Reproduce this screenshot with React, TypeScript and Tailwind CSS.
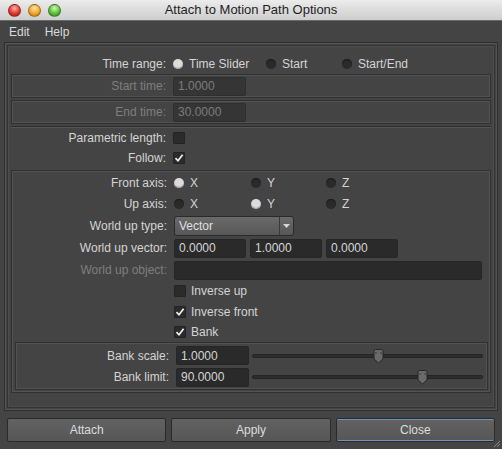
import React from 'react';

const FONT = { fontFamily: '"Liberation Sans", Arial, sans-serif' };

const Radio = ({ on }: { on?: boolean }) => (
  <span
    className={
      'inline-block w-[10px] h-[10px] rounded-full shrink-0 ' +
      (on ? 'bg-[#dcdcdc] shadow-[inset_0_-1px_1px_#999]' : 'bg-[#2a2a2a] shadow-[inset_0_1px_1px_#1a1a1a]')
    }
  />
);

const Check = ({ on }: { on?: boolean }) => (
  <span className="inline-flex items-center justify-center w-[12px] h-[12px] bg-[#2b2b2b] border border-[#232323] rounded-[1px] shrink-0">
    {on && (
      <svg width="10" height="10" viewBox="0 0 10 10">
        <path d="M1.5 5.2 L4 7.8 L8.6 1.8" fill="none" stroke="#f2f2f2" strokeWidth="1.7" />
      </svg>
    )}
  </span>
);

const Field = ({ value, w, disabled }: { value?: string; w: number; disabled?: boolean }) => (
  <div
    className={
      'h-[19px] flex items-center px-[4px] rounded-[2px] border text-[12px] ' +
      (disabled ? 'bg-[#353535] border-[#2e2e2e] text-[#7c7c7c]' : 'bg-[#2a2a2a] border-[#262626] text-[#d6d6d6]')
    }
    style={{ width: w }}
  >
    {value}
  </div>
);

const Row = ({
  label,
  lw,
  h = 22,
  dim,
  children,
}: {
  label?: string;
  lw: number;
  h?: number;
  dim?: boolean;
  children?: React.ReactNode;
}) => (
  <div className="flex items-center" style={{ height: h }}>
    <div
      className={'text-right text-[12px] shrink-0 ' + (dim ? 'text-[#7e7e7e]' : 'text-[#d4d4d4]')}
      style={{ width: lw }}
    >
      {label}
    </div>
    <div className="flex items-center ml-[7px]">{children}</div>
  </div>
);

const Opt = ({ on, text, w }: { on?: boolean; text: string; w: number }) => (
  <div className="flex items-center gap-[6px] text-[12px] text-[#d4d4d4]" style={{ width: w }}>
    <Radio on={on} />
    <span>{text}</span>
  </div>
);

const Slider = ({ pos }: { pos: number }) => (
  <div className="relative w-[231px] h-[14px] ml-[3px] flex items-center">
    <div className="w-full h-[4px] rounded-full bg-[#2d2d2d] border border-[#242424]" />
    <svg
      className="absolute top-0"
      style={{ left: Math.round(pos * 231) - 5 }}
      width="11"
      height="15"
      viewBox="0 0 11 15"
    >
      <path d="M1 2 Q1 0.5 2.5 0.5 L8.5 0.5 Q10 0.5 10 2 L10 10 L5.5 14 L1 10 Z" fill="#6a6a6a" stroke="#262626" />
      <path d="M3 3 L3 5 M8 3 L8 5" stroke="#3a3a3a" strokeWidth="1" />
    </svg>
  </div>
);

const Frame = ({ className = '', children }: { className?: string; children: React.ReactNode }) => (
  <div className={'border border-[#303030] shadow-[inset_0_0_0_1px_#525252] ' + className}>{children}</div>
);

const Light = ({ c }: { c: string }) => (
  <span className={'inline-block w-[13px] h-[13px] rounded-full border border-[#00000055] ' + c} />
);

export default function App() {
  return (
    <div className="w-[502px] h-[449px] bg-[#444444] overflow-hidden relative" style={FONT}>
      {/* title bar */}
      <div className="h-[21px] bg-gradient-to-b from-[#ececec] to-[#cdcdcd] border-b border-[#6a6a6a] flex items-center relative">
        <div className="flex items-center gap-[7px] pl-[8px]">
          <Light c="bg-[radial-gradient(circle_at_50%_30%,#ffb0a8,#e0392e_55%,#a3160e)]" />
          <Light c="bg-[radial-gradient(circle_at_50%_30%,#ffe3a0,#f2a62a_55%,#b46b08)]" />
          <Light c="bg-[radial-gradient(circle_at_50%_30%,#d6f7b8,#5cbf3a_55%,#2f7d16)]" />
        </div>
        <div className="absolute inset-0 flex items-center justify-center text-[13px] text-[#1e1e1e]">
          Attach to Motion Path Options
        </div>
      </div>

      {/* menu bar */}
      <div className="h-[21px] flex items-center gap-[15px] pl-[9px] text-[12px] text-[#dadada]">
        <span>Edit</span>
        <span>Help</span>
      </div>

      {/* main panel */}
      <div className="mx-[4px] h-[369px] border border-[#2f2f2f] shadow-[inset_0_0_0_1px_#545454] p-[2px]">
        <div className="h-full border border-[#333] shadow-[inset_0_0_0_1px_#4e4e4e] px-[3px] pt-[7px]">
          <Row label="Time range:" lw={155} h={21}>
            <Opt on text="Time Slider" w={93} />
            <Opt text="Start" w={76} />
            <Opt text="Start/End" w={80} />
          </Row>
          <Frame className="h-[24px] flex items-center">
            <Row label="Start time:" lw={154} h={22} dim>
              <Field value="1.0000" w={73} disabled />
            </Row>
          </Frame>
          <Frame className="h-[24px] mt-[2px] flex items-center">
            <Row label="End time:" lw={154} h={22} dim>
              <Field value="30.0000" w={73} disabled />
            </Row>
          </Frame>
          <div className="mt-[2px] border-t border-[#2c2c2c] border-b border-b-[#565656] h-[2px]" />
          <Row label="Parametric length:" lw={155} h={20}>
            <Check />
          </Row>
          <Row label="Follow:" lw={155} h={20}>
            <Check on />
          </Row>

          <Frame className="mt-[2px] h-[223px] px-[1px] pt-[1px]">
            <Row label="Front axis:" lw={154} h={21}>
              <Opt on text="X" w={77} />
              <Opt text="Y" w={75} />
              <Opt text="Z" w={40} />
            </Row>
            <Row label="Up axis:" lw={154} h={22}>
              <Opt text="X" w={77} />
              <Opt on text="Y" w={75} />
              <Opt text="Z" w={40} />
            </Row>
            <Row label="World up type:" lw={154} h={22}>
              <div className="w-[120px] h-[20px] flex rounded-[3px] border border-[#2a2a2a] bg-gradient-to-b from-[#6a6a6a] to-[#575757] text-[12px] text-[#e0e0e0]">
                <div className="flex-1 flex items-center pl-[4px]">Vector</div>
                <div className="w-[14px] border-l border-[#3a3a3a] flex items-center justify-center">
                  <svg width="7" height="4" viewBox="0 0 7 4">
                    <path d="M0 0 L7 0 L3.5 4 Z" fill="#d8d8d8" />
                  </svg>
                </div>
              </div>
            </Row>
            <Row label="World up vector:" lw={154} h={22}>
              <div className="flex gap-[4px]">
                <Field value="0.0000" w={72} />
                <Field value="1.0000" w={72} />
                <Field value="0.0000" w={72} />
              </div>
            </Row>
            <Row label="World up object:" lw={154} h={22} dim>
              <Field w={308} />
            </Row>
            <Row lw={154} h={20}>
              <Check />
              <span className="ml-[5px] text-[12px] text-[#d4d4d4]">Inverse up</span>
            </Row>
            <Row lw={154} h={21}>
              <Check on />
              <span className="ml-[5px] text-[12px] text-[#d4d4d4]">Inverse front</span>
            </Row>
            <Row lw={154} h={20}>
              <Check on />
              <span className="ml-[5px] text-[12px] text-[#d4d4d4]">Bank</span>
            </Row>
            <Frame className="ml-[2px] mr-[1px] h-[48px] pt-[2px]">
              <Row label="Bank scale:" lw={153} h={21}>
                <Field value="1.0000" w={73} />
                <Slider pos={0.545} />
              </Row>
              <Row label="Bank limit:" lw={153} h={22}>
                <Field value="90.0000" w={73} />
                <Slider pos={0.738} />
              </Row>
            </Frame>
          </Frame>
        </div>
      </div>

      {/* buttons */}
      <div className="flex gap-[5px] px-[7px] pt-[7px]">
        {['Attach', 'Apply', 'Close'].map((b) => (
          <div
            key={b}
            className={
              'flex-1 h-[24px] flex items-center justify-center rounded-[2px] text-[12px] text-[#dcdcdc] bg-gradient-to-b from-[#626262] to-[#565656] border ' +
              (b === 'Close' ? 'border-[#2a2a2a] shadow-[inset_0_1px_0_#6d94bd,inset_0_-1px_0_#6d94bd]' : 'border-[#2a2a2a]')
            }
          >
            {b}
          </div>
        ))}
      </div>

      {/* resize grip */}
      <svg className="absolute right-[1px] bottom-[1px]" width="8" height="8" viewBox="0 0 8 8">
        <path d="M7 1 L1 7 M7 4 L4 7" stroke="#8a8a8a" strokeWidth="1" />
      </svg>
    </div>
  );
}
